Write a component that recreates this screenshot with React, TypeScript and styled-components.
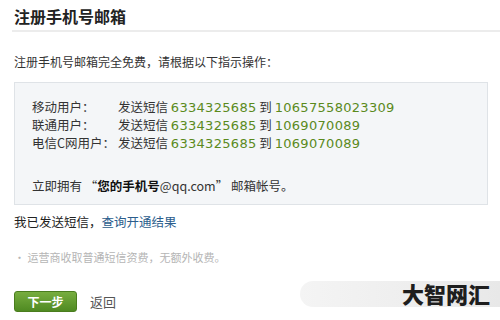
import { FC } from 'react';
import styled, { createGlobalStyle } from 'styled-components';

const GlobalStyle = createGlobalStyle`
  html, body {
    margin: 0;
    padding: 0;
    background: #fff;
  }
  body {
    width: 500px;
    height: 320px;
    overflow: hidden;
    font-family: 'SimSun', 'Noto Sans CJK SC', 'Liberation Sans', sans-serif;
    font-size: 12px;
    color: #333;
  }
`;

const rows = [
  { label: '移动用户：', code: '6334325685', to: '10657558023309' },
  { label: '联通用户：', code: '6334325685', to: '1069070089' },
  { label: '电信C网用户：', code: '6334325685', to: '1069070089' },
];

const App: FC = () => (
  <Page>
    <GlobalStyle />
    <Title>注册手机号邮箱</Title>
    <Intro>注册手机号邮箱完全免费，请根据以下指示操作：</Intro>
    <Box>
      <Rows>
        {rows.map(r => (
          <Row key={r.label}>
            <Label>{r.label}</Label>
            <span>
              发送短信 <Num>{r.code}</Num> 到 <Num>{r.to}</Num>
            </span>
          </Row>
        ))}
      </Rows>
      <Own>
        立即拥有 “<b>您的手机号</b>@qq.com” 邮箱帐号。
      </Own>
    </Box>
    <Sent>
      我已发送短信，<Link>查询开通结果</Link>
    </Sent>
    <Note>• 运营商收取普通短信资费，无额外收费。</Note>
    <Actions>
      <NextButton>下一步</NextButton>
      <Back>返回</Back>
    </Actions>
    <Watermark>
      <Pill />
      <Mark>大智网汇</Mark>
    </Watermark>
  </Page>
);

export default App;

const Page = styled.div`
  position: relative;
  width: 500px;
  height: 320px;
  padding: 6px 0 0 14px;
  box-sizing: border-box;
`;

const Title = styled.h1`
  margin: 0 0 0 -2px;
  padding: 0 0 4px 2px;
  height: 20px;
  font-size: 16px;
  font-weight: bold;
  color: #222;
  line-height: 20px;
  border-bottom: 2px solid #ececec;
  font-family: 'Noto Sans CJK SC', sans-serif;
`;

const Intro = styled.p`
  margin: 22px 0 0;
  height: 16px;
  line-height: 16px;
  font-size: 12px;
  color: #333;
`;

const Box = styled.div`
  margin-top: 12px;
  width: 474px;
  height: 123px;
  box-sizing: border-box;
  background: #f4f6f8;
  border: 1px solid #dfe3e7;
  padding: 15px 0 0 17px;
`;

const Rows = styled.div`
  display: flex;
  flex-direction: column;
`;

const Row = styled.div`
  display: flex;
  height: 18px;
  line-height: 18px;
  font-size: 12.5px;
  color: #333;
`;

const Label = styled.span`
  width: 86px;
`;

const Num = styled.span`
  color: #5b8a1c;
  font-family: 'DejaVu Sans', Verdana, sans-serif;
  font-size: 13px;
  line-height: 18px;
  letter-spacing: 0.3px;
`;

const Own = styled.div`
  margin-top: 25px;
  height: 18px;
  line-height: 18px;
  font-size: 12.5px;
  color: #333;

  > b {
    color: #111;
  }
`;

const Sent = styled.div`
  margin-top: 8px;
  height: 18px;
  line-height: 18px;
  font-size: 12.5px;
  color: #222;
`;

const Link = styled.span`
  color: #2b5d8c;
`;

const Note = styled.div`
  margin-top: 18px;
  height: 16px;
  line-height: 16px;
  font-size: 11px;
  color: #b5b5b5;
`;

const Actions = styled.div`
  margin-top: 26px;
  display: flex;
  align-items: center;
  gap: 13px;
`;

const NextButton = styled.button`
  width: 63px;
  height: 21px;
  padding: 0;
  border: 1px solid #4a7d1e;
  border-radius: 3px;
  background: linear-gradient(#77ad3f, #4f8a22);
  color: #fff;
  font-size: 12px;
  font-weight: bold;
  font-family: 'Noto Sans CJK SC', sans-serif;
  line-height: 19px;
`;

const Back = styled.span`
  font-size: 13px;
  color: #555;
`;

const Watermark = styled.div`
  position: absolute;
  right: 0;
  bottom: 13px;
  width: 200px;
  height: 26px;
`;

const Pill = styled.div`
  position: absolute;
  inset: 0;
  border-radius: 13px 0 0 13px;
  background: linear-gradient(90deg, #f4f4f4, #eeeeee 55%, #e8e8e8);
`;

const Mark = styled.div`
  position: absolute;
  right: 10px;
  top: -1px;
  font-size: 22px;
  font-weight: 900;
  line-height: 26px;
  color: #1e1e1e;
  font-family: 'Noto Sans CJK SC', sans-serif;
`;
